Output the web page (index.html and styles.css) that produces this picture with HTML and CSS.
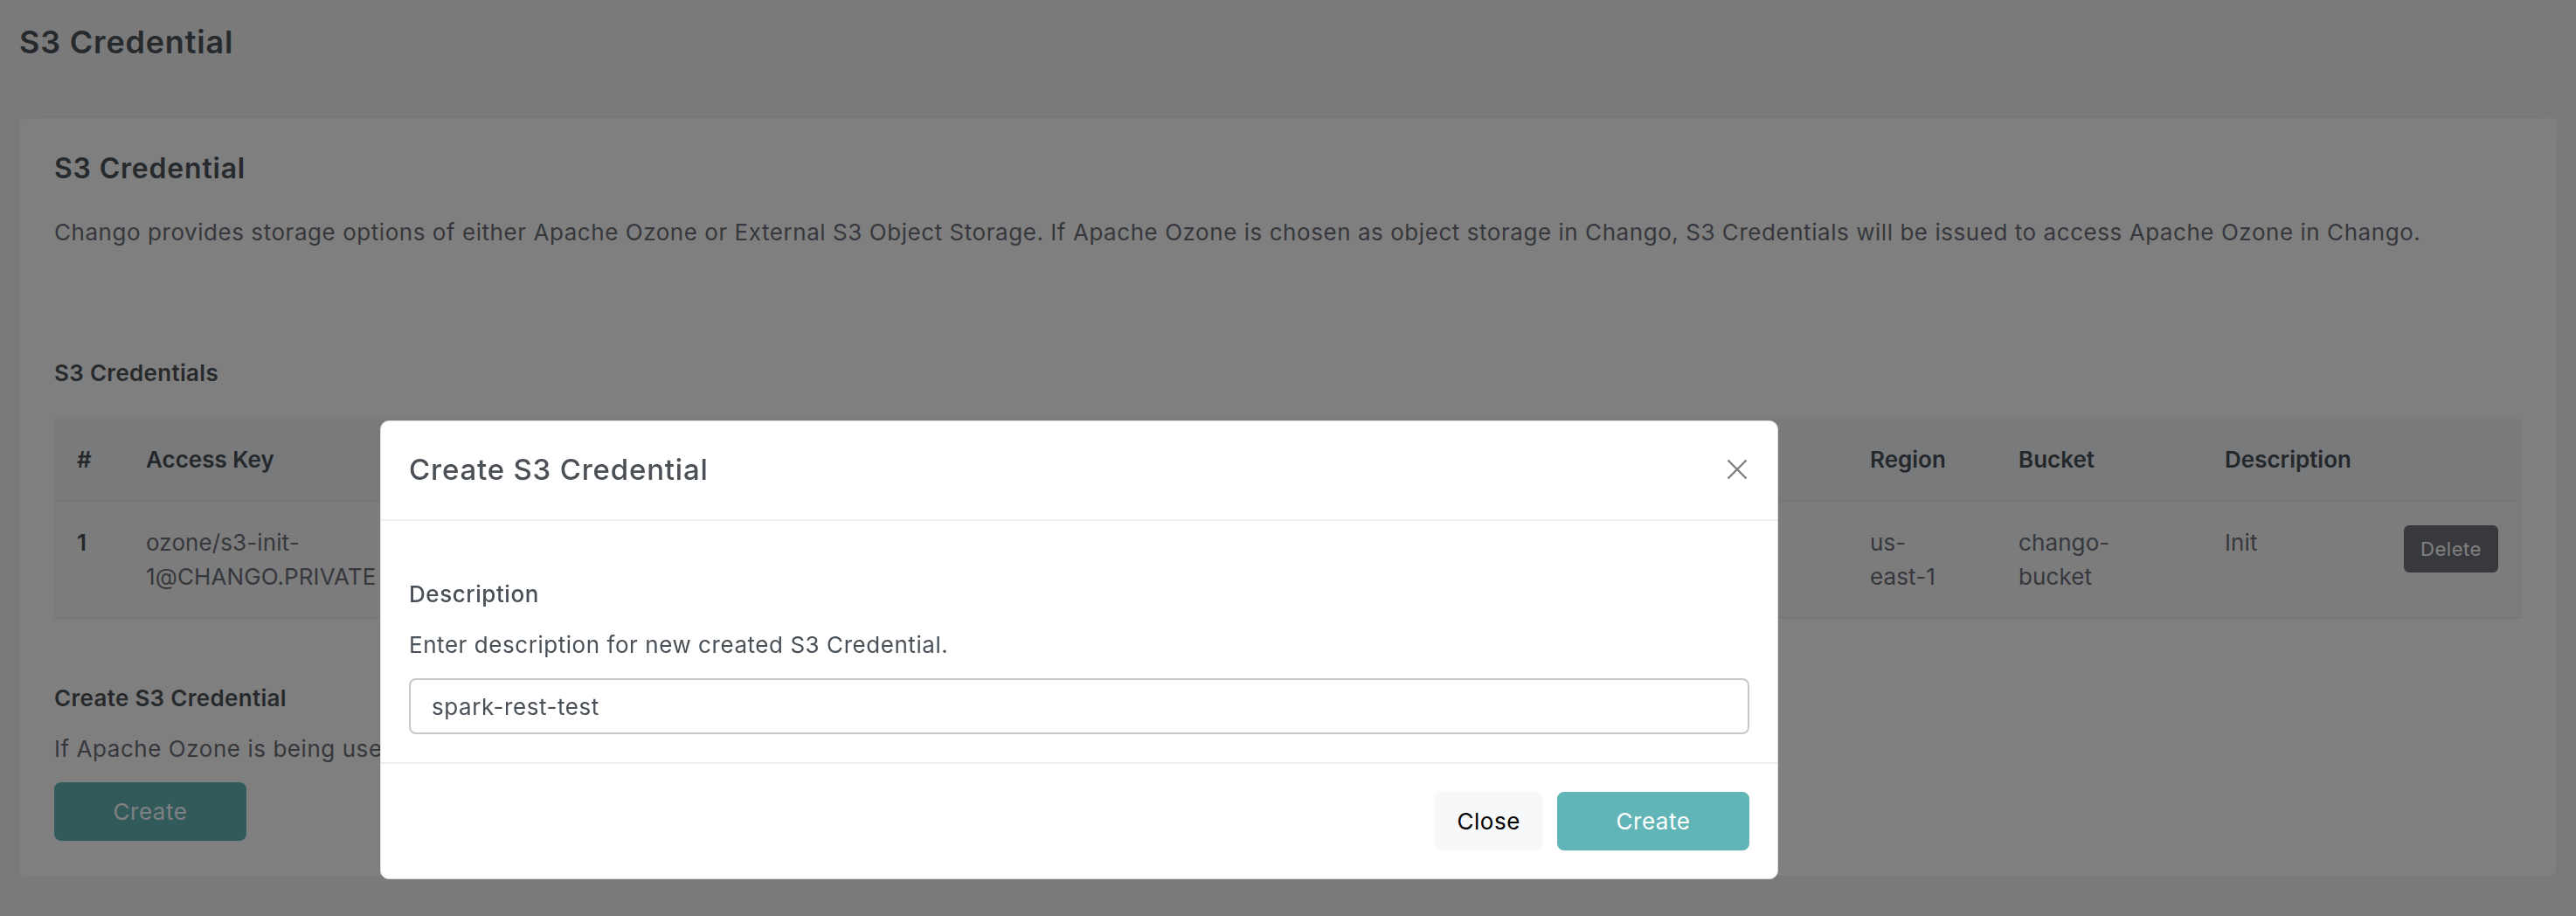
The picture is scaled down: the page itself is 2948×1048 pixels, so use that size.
FILE: index.html
```html
<!DOCTYPE html>
<html lang="en">
  <head>
    <meta charset="utf-8" />
    <title>S3 Credential</title>
    <link rel="stylesheet" href="styles.css">
  </head>
  <body>
    <div class="page">
      <h4 class="page-title">S3 Credential</h4>

      <div class="card">
        <h4 class="card-title">S3 Credential</h4>
        <p class="card-desc">
          Chango provides storage options of either Apache Ozone or External S3 Object Storage. If Apache Ozone is chosen as object storage in Chango, S3 Credentials will be issued to access Apache Ozone in Chango.
        </p>

        <h5 class="section-title">S3 Credentials</h5>
        <table class="table">
          <colgroup>
            <col style="width: 79px">
            <col style="width: 352px">
            <col style="width: 800px">
            <col style="width: 821px">
            <col style="width: 170px">
            <col style="width: 236px">
            <col style="width: 205px">
            <col style="width: 161px">
          </colgroup>
          <thead>
            <tr>
              <th>#</th>
              <th>Access Key</th>
              <th>Secret Key</th>
              <th>Endpoint</th>
              <th>Region</th>
              <th>Bucket</th>
              <th>Description</th>
              <th></th>
            </tr>
          </thead>
          <tbody>
            <tr>
              <th>1</th>
              <td>ozone/s3-init-1@CHANGO.PRIVATE</td>
              <td>**********</td>
              <td>http://chango-s3:9878</td>
              <td class="narrow">us-east-1</td>
              <td class="narrow">chango-bucket</td>
              <td>Init</td>
              <td><button class="btn btn-sm btn-secondary">Delete</button></td>
            </tr>
          </tbody>
        </table>

        <h5 class="section-title create-title">Create S3 Credential</h5>
        <p class="card-desc create-desc">If Apache Ozone is being used, create a new S3 Credential.</p>
        <button class="btn btn-teal">Create</button>
      </div>
    </div>

    <div class="backdrop"></div>

    <div class="modal">
      <div class="modal-header">
        <h5 class="modal-title">Create S3 Credential</h5>
        <button class="btn-close" aria-label="Close">
          <svg viewBox="0 0 16 16" width="28" height="28">
            <path d="M2 2 L14 14 M14 2 L2 14" stroke="#808080" stroke-width="1.4" fill="none" />
          </svg>
        </button>
      </div>
      <div class="modal-body">
        <div class="form-group">
          <label class="form-label" for="description">Description</label>
          <p class="form-help">Enter description for new created S3 Credential.</p>
          <input id="description" class="form-control" type="text" value="spark-rest-test" autofocus>
        </div>
      </div>
      <div class="modal-footer">
        <button class="btn btn-light">Close</button>
        <button class="btn btn-teal">Create</button>
      </div>
    </div>
  </body>
</html>
```

FILE: styles.css
```css
* {
  box-sizing: border-box;
}

body {
  margin: 0;
  background: #f4f4f5;
  font-family: Inter, "Open Sans", sans-serif;
  font-size: 26px;
  line-height: 39px;
  letter-spacing: 0.55px;
  color: #495057;
}

h4,
h5,
p {
  margin: 0;
}

.page {
  padding: 28px 22px 0;
}

.page-title {
  font-size: 36px;
  line-height: 41px;
  font-weight: 600;
  letter-spacing: 0.8px;
  color: #4f545b;
  margin-bottom: 66px;
}

.card {
  background: #fff;
  border-radius: 8px;
  padding: 40px;
  box-shadow: 0 12px 24px rgba(18, 38, 63, 0.03);
}

.card-title {
  font-size: 32px;
  line-height: 36px;
  font-weight: 600;
  letter-spacing: 0.8px;
  color: #4f545b;
  margin-bottom: 35px;
}

.card-desc {
  color: #6d717a;
}

.section-title {
  font-size: 26px;
  line-height: 31px;
  font-weight: 600;
  letter-spacing: 0.3px;
  color: #4f545b;
  margin: 126px 0 37px;
}

.create-title {
  margin: 75px 0 23px;
}

.create-desc {
  margin-bottom: 19px;
}

/* table */
.table {
  width: 100%;
  table-layout: fixed;
  border-collapse: collapse;
}

.table th,
.table td {
  text-align: left;
  vertical-align: top;
  padding: 27px 26px;
  letter-spacing: 0.1px;
}

.table th {
  letter-spacing: 0;
}

.table thead th {
  background: #f3f4f6;
  font-weight: 600;
  color: #495057;
  border-bottom: 2px solid #eceef1;
}

.table tbody th,
.table tbody td {
  background: #f8f9fa;
  border-bottom: 2px solid #eceef1;
  color: #6d717a;
}

.table tbody th {
  font-weight: 600;
  color: #495057;
}

.table td.narrow {
  padding-right: 40px;
}

/* buttons */
.btn {
  font-family: inherit;
  font-size: 26px;
  line-height: 39px;
  letter-spacing: 0.55px;
  padding: 12px 24px;
  border: 2px solid transparent;
  border-radius: 8px;
  cursor: pointer;
}

.btn-sm {
  font-size: 22px;
  line-height: 34px;
  padding: 8px 17px;
  border-radius: 6px;
}

.btn-secondary {
  background: #6e737a;
  border-color: #6e737a;
  color: #fff;
}

.btn-teal {
  width: 220px;
  background: #62b5b7;
  border-color: #62b5b7;
  color: #fff;
}

.btn-light {
  background: #f7f8fa;
  border-color: #f7f8fa;
  color: #000;
}

/* modal */
.backdrop {
  position: fixed;
  inset: 0;
  background: rgba(0, 0, 0, 0.5);
}

.modal {
  position: absolute;
  left: 435px;
  top: 481px;
  width: 1600px;
  background: #fff;
  border: 1px solid #d9dbde;
  border-radius: 10px;
}

.modal-header {
  display: flex;
  align-items: center;
  justify-content: space-between;
  padding: 31px 32px 33px;
  border-bottom: 2px solid #eceef2;
}

.modal-title {
  font-size: 33px;
  line-height: 48px;
  font-weight: 500;
  letter-spacing: 0.8px;
  color: #4b5056;
}

.btn-close {
  display: flex;
  padding: 0;
  border: 0;
  background: none;
  cursor: pointer;
}

.modal-body {
  padding: 32px;
}

.form-group {
  margin-top: 32px;
}

.form-label {
  display: block;
  font-weight: 500;
  margin-bottom: 19px;
}

.form-help {
  margin-bottom: 19px;
}

.form-control {
  display: block;
  width: 100%;
  height: 64px;
  padding: 0 24px;
  font-family: inherit;
  font-size: 26px;
  letter-spacing: 0.55px;
  color: #495057;
  border: 2px solid #c4c9ce;
  border-radius: 8px;
  outline: none;
}

.modal-footer {
  display: flex;
  justify-content: flex-end;
  gap: 16px;
  padding: 32px;
  border-top: 2px solid #eceef2;
}
```
